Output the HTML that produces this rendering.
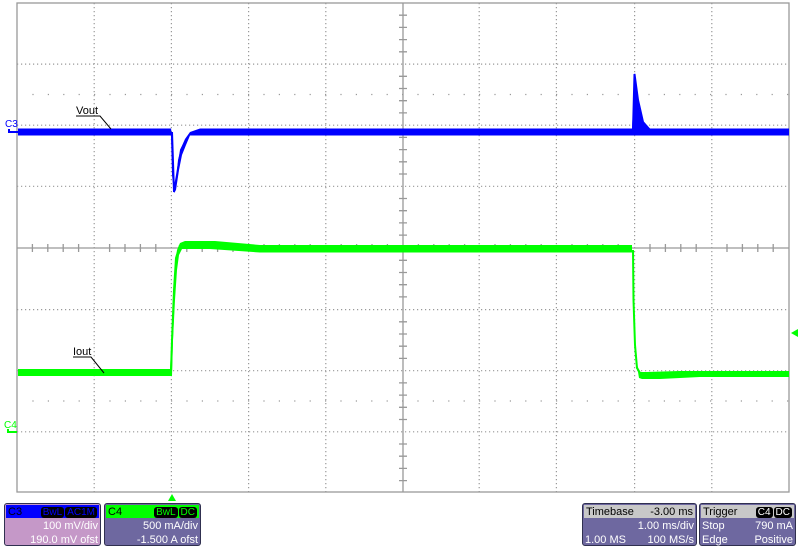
<!DOCTYPE html>
<html><head><meta charset="utf-8"><style>
body{margin:0;background:#fff;width:800px;height:547px;overflow:hidden;font-family:"Liberation Sans",sans-serif;}
.p{position:absolute;border:1.5px solid #303050;border-radius:3px;box-sizing:border-box;color:#fff;font-size:11px;line-height:14px;}
.h{height:13px;margin:1px;padding:0 2px;display:flex;justify-content:space-between;align-items:center;}
.r{display:flex;justify-content:space-between;padding:0 2px;}
.b{background:#000;border-radius:3px;padding:0 2px;font-size:10px;line-height:11px;margin-left:1px}
</style></head><body>
<svg width="800" height="547" style="position:absolute;left:0;top:0">
<g stroke="#999" stroke-width="1.2" stroke-dasharray="1.2 2.8" fill="none">
<path d="M94.2 3V492M171.4 3V492M248.6 3V492M325.8 3V492M479.2 3V492M556.4 3V492M634.6 3V492M711.8 3V492"/>
<path d="M17 64.1H789M17 125.2H789M17 186.3H789M17 309.6H789M17 370.7H789M17 431.8H789"/>
</g>
<g stroke="#999" stroke-width="1.2" stroke-dasharray="1.2 14.2" fill="none">
<path d="M32.4 94.5H789M32.4 401H789"/>
</g>
<g stroke="#999" stroke-width="1.3" fill="none">
<rect x="17" y="3" width="772" height="489"/>
<path d="M403 3V492M17 248H789"/>
<path d="M399 15.2h8M399 27.4h8M399 39.6h8M399 51.8h8M399 76.3h8M399 88.5h8M399 100.7h8M399 112.9h8M399 137.4h8M399 149.6h8M399 161.8h8M399 174h8M399 198.5h8M399 210.7h8M399 222.9h8M399 235.1h8M399 260.3h8M399 272.5h8M399 284.7h8M399 296.9h8M399 321.8h8M399 334h8M399 346.2h8M399 358.4h8M399 382.9h8M399 395.1h8M399 407.3h8M399 419.5h8M399 444h8M399 456.2h8M399 468.4h8M399 480.6h8"/>
<path d="M32.4 244v8M47.8 244v8M63.2 244v8M78.6 244v8M109.6 244v8M125 244v8M140.4 244v8M155.8 244v8M186.8 244v8M202.2 244v8M217.6 244v8M233 244v8M264 244v8M279.4 244v8M294.8 244v8M310.2 244v8M341.2 244v8M356.6 244v8M372 244v8M387.4 244v8M418.4 244v8M433.8 244v8M449.2 244v8M464.6 244v8M495 244v8M510.4 244v8M525.8 244v8M541.2 244v8M572 244v8M587.4 244v8M602.8 244v8M618.2 244v8M650 244v8M665.4 244v8M680.8 244v8M696.2 244v8M727 244v8M742.4 244v8M757.8 244v8M773.2 244v8"/>
</g>
<!-- blue trace -->
<path fill="#0000ff" d="M18 128.5H171L172 135L173 160L174 192L176 180L178 160L181 148L185 139L190 132L200 128.5H632L633 110L634 76L635 73L637 90L639 108L642 120L646 126L650 128.5H789V135.5H650L200 135.5H190L186 145L182 155L179 170L176 190L174 193L172 175L171 135.5H18Z"/>
<path stroke="#0000ff" stroke-width="2" fill="none" d="M172 132L174 192L177 175L181 150L188 137M633 130L634.5 74L638 100L643 122L650 130"/>
<path stroke="#0000ff" stroke-width="2" d="M8 132H18M9 129v4"/>
<!-- green trace -->
<path fill="#00ff00" d="M18 369H170L171 350L173 300L175 265L177 250L180 243L185 241H215L260 245H632V251L633 280L635 340L637 365L640 372L646 372L680 371H789V377H700L660 379H642L639 378L636 360L634 300L632 252.5L260 252.5L210 249H182L179 255L177 270L175 300L173 340L172 376H18Z"/>
<path stroke="#00ff00" stroke-width="2" fill="none" d="M171 372L172 340L174 290L176 258L180 245M633 250L633.5 300L635 345L637 368L642 376"/>
<path stroke="#00ff00" stroke-width="2" d="M8 432H17M8 429v4"/>
<path fill="#00ff00" d="M172 494L168 501H176ZM791 333L798 329V337Z"/>
<!-- labels -->
<g stroke="#000" stroke-width="1" fill="none">
<path d="M76 116H100L111 129"/><path d="M73 357H91L104 373"/>
</g>
<text x="76" y="114" font-size="11" font-family="Liberation Sans">Vout</text>
<text x="73" y="355" font-size="11" font-family="Liberation Sans">Iout</text>
<text x="5" y="127" font-size="10" fill="#0000ff" font-family="Liberation Sans">C3</text>
<text x="4" y="428" font-size="10" fill="#00ff00" font-family="Liberation Sans">C4</text>
</svg>
<div class="p" style="left:4px;top:503px;width:97px;height:43px;background:#c598c8">
<div class="h" style="background:#0000ff;color:#000"><span>C3</span><span><span class="b" style="color:#0000ff">BwL</span><span class="b" style="color:#0000ff">AC1M</span></span></div>
<div class="r" style="justify-content:flex-end">100 mV/div</div>
<div class="r" style="justify-content:flex-end">190.0 mV ofst</div></div>
<div class="p" style="left:104px;top:503px;width:97px;height:43px;background:#6e68a0">
<div class="h" style="background:#00ff00;color:#000"><span>C4</span><span><span class="b" style="color:#00ff00">BwL</span><span class="b" style="color:#00ff00">DC</span></span></div>
<div class="r" style="justify-content:flex-end">500 mA/div</div>
<div class="r" style="justify-content:flex-end">-1.500 A ofst</div></div>
<div class="p" style="left:582px;top:503px;width:115px;height:43px;background:#6e68a0">
<div class="h" style="background:#c8c8c8;color:#000"><span>Timebase</span><span>-3.00 ms</span></div>
<div class="r" style="justify-content:flex-end">1.00 ms/div</div>
<div class="r"><span>1.00 MS</span><span>100 MS/s</span></div></div>
<div class="p" style="left:699px;top:503px;width:97px;height:43px;background:#6e68a0">
<div class="h" style="background:#c8c8c8;color:#000"><span>Trigger</span><span><span class="b" style="color:#fff">C4</span><span class="b" style="color:#fff">DC</span></span></div>
<div class="r"><span>Stop</span><span>790 mA</span></div>
<div class="r"><span>Edge</span><span>Positive</span></div></div>
</body></html>
